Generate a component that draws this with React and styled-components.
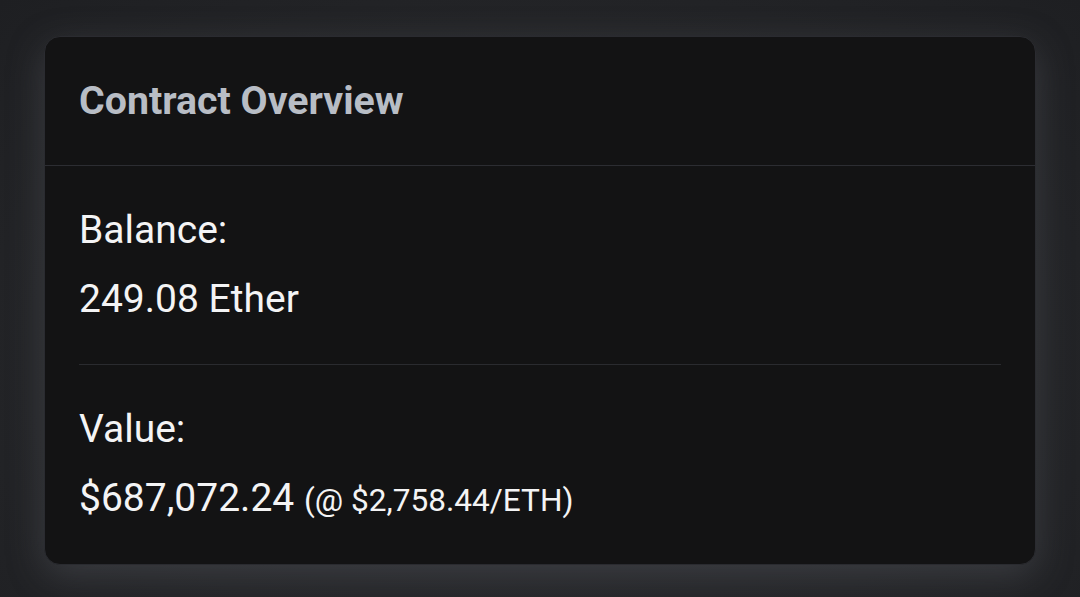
import React from "react";
import styled, { createGlobalStyle } from "styled-components";

const GlobalStyle = createGlobalStyle`
    html, body {
        margin: 0;
        padding: 0;
        background: #1f2023;
        height: 100%;
    }
    body {
        font-family: Roboto, "Liberation Sans", sans-serif;
        -webkit-font-smoothing: antialiased;
    }
    #root {
        min-height: 100%;
    }
`;

const Page = styled.main`
    min-height: 597px;
    box-sizing: border-box;
    padding: 36px 44px 34px;
    background: radial-gradient(ellipse at 50% 60%, #2a2b2f 0%, #242528 60%, #1e1f22 100%);
`;

const Card = styled.section`
    background-color: #131314;
    border: 1px solid #2a2b30;
    border-radius: 16px;
    box-shadow: 0 10px 36px rgba(88, 90, 98, 0.45);
    overflow: hidden;
`;
Card.displayName = 'Card';

const CardHeader = styled.header`
    height: 128px;
    display: flex;
    align-items: center;
    padding: 0 34px;
    border-bottom: 1px solid #2c2d32;
`;
CardHeader.displayName = 'CardHeader';

const Title = styled.h2`
    margin: 0;
    font-size: 39.3px;
    font-weight: 700;
    color: #b8bdc5;
`;
Title.displayName = 'Title';

const CardBody = styled.div`
    padding: 0 34px;
`;

const Section = styled.div`
    padding: 41px 0 42px;
    & + & {
        border-top: 1px solid #2a2b2f;
        padding-bottom: 40px;
    }
`;
Section.displayName = 'Section';

const Label = styled.div`
    font-size: 39px;
    line-height: 46px;
    color: #f4f4f5;
    margin-bottom: 23px;
`;
Label.displayName = 'Label';

const Amount = styled.div`
    font-size: 39px;
    line-height: 46px;
    color: #f4f4f5;
`;
Amount.displayName = 'Amount';

const Rate = styled.span`
    font-size: 31.6px;
`;
Rate.displayName = 'Rate';

export default function App() {
    return (
        <>
            <GlobalStyle />
            <Page>
                <Card>
                    <CardHeader>
                        <Title>Contract Overview</Title>
                    </CardHeader>
                    <CardBody>
                        <Section>
                            <Label>Balance:</Label>
                            <Amount>249.08 Ether</Amount>
                        </Section>
                        <Section>
                            <Label>Value:</Label>
                            <Amount>
                                $687,072.24 <Rate>(@ $2,758.44/ETH)</Rate>
                            </Amount>
                        </Section>
                    </CardBody>
                </Card>
            </Page>
        </>
    );
}
